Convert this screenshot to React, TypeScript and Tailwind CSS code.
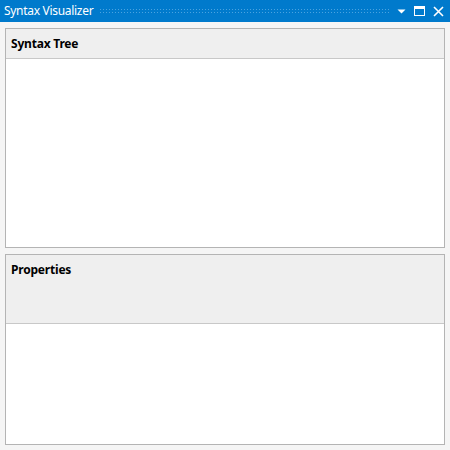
import React from 'react';

const font = { fontFamily: '"Noto Sans", "Open Sans", sans-serif' };

const Panel: React.FC<{ title: string; headerClass: string; bodyClass: string }> = ({
  title,
  headerClass,
  bodyClass,
}) => (
  <div className="flex flex-col border border-[#b4b4b4] bg-white">
    <div className={`bg-[#efefef] border-b border-[#c8c8c8] px-[5px] pt-[7px] ${headerClass}`}>
      <span className="block text-[12px] font-bold text-black leading-[16px] tracking-[-0.2px]">{title}</span>
    </div>
    <div className={`bg-white ${bodyClass}`}></div>
  </div>
);

export default function App() {
  return (
    <div className="w-[450px] h-[450px] bg-[#f5f5f5] flex flex-col" style={font}>
      {/* Title bar */}
      <div className="h-[22px] bg-[#007acc] flex items-center pl-[4px] pr-[6px]">
        <span className="text-white text-[12px] leading-none whitespace-nowrap tracking-[-0.3px]">Syntax Visualizer</span>
        <div className="flex-1 mx-[6px] h-[6px] bg-[radial-gradient(circle,#4aa3e0_0.8px,transparent_1px)] bg-[length:3px_3px]"></div>
        <div className="flex items-center gap-[8px]">
          <svg width="9" height="6" viewBox="0 0 9 6">
            <path d="M0.5 1.5h8L4.5 5.5z" fill="white" />
          </svg>
          <svg width="11" height="10" viewBox="0 0 11 10">
            <rect x="0.5" y="0.5" width="10" height="9" fill="none" stroke="white" />
            <rect x="0" y="0" width="11" height="3" fill="white" />
          </svg>
          <svg width="11" height="11" viewBox="0 0 11 11">
            <path d="M1 1L10 10M10 1L1 10" stroke="white" strokeWidth="1.6" />
          </svg>
        </div>
      </div>

      {/* Content */}
      <div className="flex flex-col gap-[6px] px-[5px] pt-[6px]">
        <Panel title="Syntax Tree" headerClass="h-[30px]" bodyClass="h-[188px]" />
        <Panel title="Properties" headerClass="h-[69px]" bodyClass="h-[120px]" />
      </div>
    </div>
  );
}
